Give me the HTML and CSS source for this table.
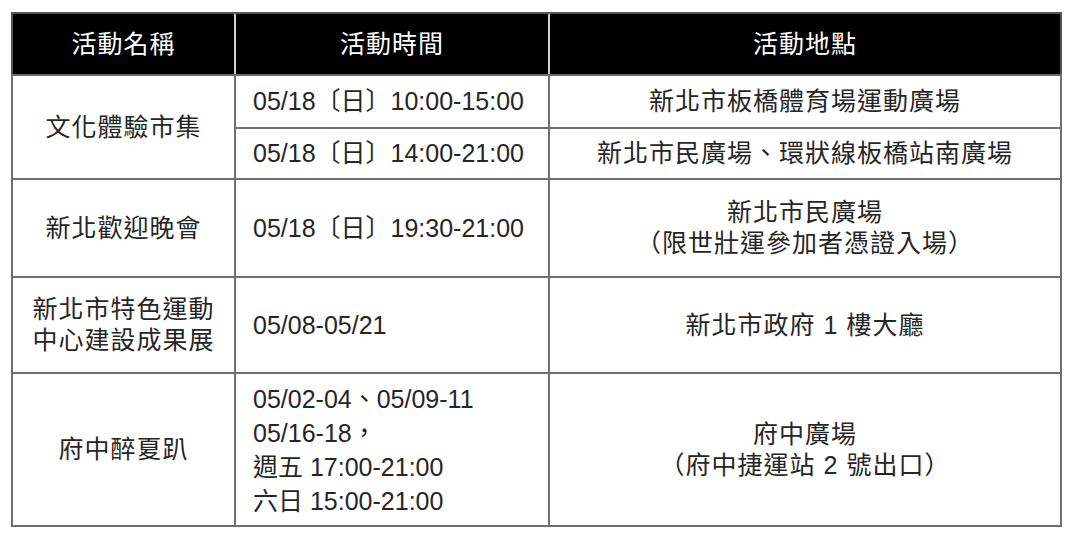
FILE: index.html
```html
<!DOCTYPE html>
<html lang="zh-Hant">
<head>
<meta charset="utf-8">
<link rel="stylesheet" href="styles.css">
</head>
<body>
<div class="page">
<table class="events">
  <colgroup>
    <col class="c-name">
    <col class="c-time">
    <col class="c-place">
  </colgroup>
  <thead>
    <tr class="head">
      <th>活動名稱</th>
      <th>活動時間</th>
      <th>活動地點</th>
    </tr>
  </thead>
  <tbody>
    <tr class="r1a">
      <td class="name" rowspan="2">文化體驗市集</td>
      <td class="time">05/18〔日〕10:00-15:00</td>
      <td class="place">新北市板橋體育場運動廣場</td>
    </tr>
    <tr class="r1b">
      <td class="time">05/18〔日〕14:00-21:00</td>
      <td class="place">新北市民廣場、環狀線板橋站南廣場</td>
    </tr>
    <tr class="r2">
      <td class="name">新北歡迎晚會</td>
      <td class="time">05/18〔日〕19:30-21:00</td>
      <td class="place">新北市民廣場<br>（限世壯運參加者憑證入場）</td>
    </tr>
    <tr class="r3">
      <td class="name">新北市特色運動<br>中心建設成果展</td>
      <td class="time">05/08-05/21</td>
      <td class="place">新北市政府 1 樓大廳</td>
    </tr>
    <tr class="r4">
      <td class="name">府中醉夏趴</td>
      <td class="time multi">05/02-04、05/09-11<br>05/16-18，<br>週五 17:00-21:00<br>六日 15:00-21:00</td>
      <td class="place">府中廣場<br>（府中捷運站 2 號出口）</td>
    </tr>
  </tbody>
</table>
</div>
</body>
</html>
```

FILE: styles.css
```css
html, body {
  margin: 0;
  padding: 0;
  background: #ffffff;
}

.page {
  padding: 12px 0 0 11px;
}

.events {
  border-collapse: collapse;
  table-layout: fixed;
  width: 1049px;
  font-family: "Liberation Sans", "Noto Sans CJK TC", sans-serif;
  font-size: 25px;
  line-height: 31px;
  color: #262626;
}

.c-name { width: 223px; }
.c-time { width: 314px; }
.c-place { width: 512px; }

.head th {
  background: #000000;
  color: #ffffff;
  font-weight: 400;
  height: 60px;
  padding: 0;
  text-align: center;
  vertical-align: middle;
  border-left: 2px solid #d0d0d0;
  border-top: 2px solid #555555;
  border-bottom: 2px solid #6a6a6a;
  letter-spacing: 1px;
}

.head th:first-child { border-left: 2px solid #555555; }
.head th:last-child { border-right: 2px solid #555555; }

.events td {
  border: 2px solid #707070;
  padding: 0;
  vertical-align: middle;
}

.name {
  text-align: center;
  letter-spacing: 1px;
}

.time {
  text-align: left;
  padding-left: 17px !important;
}

.place {
  text-align: center;
  letter-spacing: 1px;
}

.r1a td { height: 51px; }
.r1b td { height: 49px; }
.r2 td { height: 96px; }
.r3 td { height: 94px; }
.r4 td { height: 151px; }

.multi {
  line-height: 34px;
}
```
